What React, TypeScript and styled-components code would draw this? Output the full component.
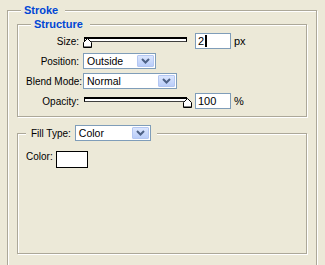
import React from "react";
import styled, {createGlobalStyle} from "styled-components";

const GlobalStyle = createGlobalStyle`
  html, body {
    margin: 0;
    background: #ece9d8;
  }
  body {
    font-family: "Liberation Sans", Arial, sans-serif;
    font-size: 10px;
    color: #000;
  }
`
const Group = styled.fieldset<{ $pad: number }>`
  box-sizing: border-box;
  min-width: 0;
  margin: 0;
  padding: 0 ${p => p.$pad}px;
  border: 1px solid #aca899;
  box-shadow: 1px 1px 0 #fff, inset 1px 1px 0 #fff;
`
const Outer = styled(Group)`
  width: 310px;
  margin: 3px 0 0 7px;
  padding-bottom: 20px;
`
const Structure = styled(Group)`
  width: 290px;
  padding-top: 2px;
  padding-bottom: 7px;
`
const Fill = styled(Group)`
  width: 290px;
  margin-top: 8px;
`
const Caption = styled.legend<{ $indent: number }>`
  margin-left: ${p => p.$indent}px;
  padding: 0 7px 0 3px;
  background: #ece9d8;
  color: #0046d5;
  font-weight: bold;
  font-size: 11px;
  line-height: 14px;
`
const FillLegend = styled.legend`
  padding: 0 6px 0 5px;
  background: #ece9d8;

  > div {
    display: flex;
    align-items: center;
    height: 16px;
  }
`
const Row = styled.div`
  display: flex;
  align-items: center;
  height: 16px;
  margin-bottom: 4px;

  &:last-child {
    margin-bottom: 0;
  }
`
const Label = styled.span<{ $width?: number }>`
  flex-shrink: 0;
  width: ${p => p.$width ? p.$width + 'px' : 'auto'};
  text-align: right;
  margin-right: 4px;
  white-space: nowrap;
`
const Slider = styled.div`
  position: relative;
  width: 103px;
  height: 16px;
  margin-left: 1px;

  > .track {
    box-sizing: border-box;
    margin-top: 4px;
    height: 5px;
    border: 1px solid #000;
    border-top-width: 2px;
    border-bottom-color: #404040;
    background: #fff;
  }

  > svg {
    position: absolute;
    top: 5px;
  }
`
const NumberBox = styled.div`
  box-sizing: border-box;
  width: 36px;
  height: 16px;
  margin-left: 8px;
  padding-left: 2px;
  border: 1px solid #7f9db9;
  background: #fff;
  font-size: 11px;
  line-height: 14px;
  display: flex;
  align-items: center;

  > .caret {
    width: 2px;
    height: 12px;
    margin-left: 1px;
    background: #000;
  }
`
const Unit = styled.span`
  margin-left: 3px;
  font-size: 11px;
`
const Select = styled.div<{ $width: number }>`
  box-sizing: border-box;
  width: ${p => p.$width}px;
  height: 16px;
  border: 1px solid #7f9db9;
  background: #fff;
  display: flex;
  align-items: center;
  padding-left: 3px;

  > span {
    flex: 1;
    font-size: 10.5px;
  }
`
const ArrowButton = styled.div`
  box-sizing: border-box;
  width: 17px;
  height: 12px;
  margin-right: 1px;
  border: 1px solid #b4c7f2;
  border-radius: 1px;
  background: linear-gradient(#dbe6fe, #b9cdf9);
  display: flex;
  align-items: center;
  justify-content: center;
`
const FillBody = styled.div`
  box-sizing: border-box;
  height: 112px;
  padding-top: 10px;
  display: flex;
  align-items: flex-start;
`
const Swatch = styled.div`
  box-sizing: border-box;
  width: 32px;
  height: 17px;
  margin-left: -1px;
  border: 1px solid #000;
  background: #fff;
`
const Thumb: React.FC<{ side: 'left' | 'right' }> = ({side}) => (
    <svg width="9" height="10" viewBox="0 0 9 10" style={side === 'left' ? {left: -1} : {right: -5}}>
        <path d="M0.5 9.5V4.5L4.5 0.5L8.5 4.5V9.5Z" fill="#fff" stroke="#000"/>
        <path d="M1 9H8" stroke="#000"/>
    </svg>
)
const Dropdown: React.FC<{ width: number, value: string }> = ({width, value}) => (
    <Select $width={width}>
        <span>{value}</span>
        <ArrowButton>
            <svg width="9" height="6" viewBox="0 0 9 6">
                <path d="M1 1L4.5 4.5L8 1" fill="none" stroke="#4d6185" strokeWidth="2"/>
            </svg>
        </ArrowButton>
    </Select>
)

export default function App() {
    return (
        <>
            <GlobalStyle/>
            <Outer $pad={9}>
                <Caption $indent={4}>Stroke</Caption>
                <Structure $pad={8}>
                    <Caption $indent={5}>Structure</Caption>
                    <Row>
                        <Label $width={53}>Size:</Label>
                        <Slider>
                            <div className="track"/>
                            <Thumb side="left"/>
                        </Slider>
                        <NumberBox>2<span className="caret"/></NumberBox>
                        <Unit>px</Unit>
                    </Row>
                    <Row>
                        <Label $width={53}>Position:</Label>
                        <Dropdown width={73} value="Outside"/>
                    </Row>
                    <Row>
                        <Label $width={53}>Blend Mode:</Label>
                        <Dropdown width={94} value="Normal"/>
                    </Row>
                    <Row>
                        <Label $width={53}>Opacity:</Label>
                        <Slider>
                            <div className="track"/>
                            <Thumb side="right"/>
                        </Slider>
                        <NumberBox>100</NumberBox>
                        <Unit>%</Unit>
                    </Row>
                </Structure>
                <Fill $pad={8}>
                    <FillLegend>
                        <div>
                            <Label>Fill Type:</Label>
                            <Dropdown width={76} value="Color"/>
                        </div>
                    </FillLegend>
                    <FillBody>
                        <Label>Color:</Label>
                        <Swatch/>
                    </FillBody>
                </Fill>
            </Outer>
        </>
    )
}
